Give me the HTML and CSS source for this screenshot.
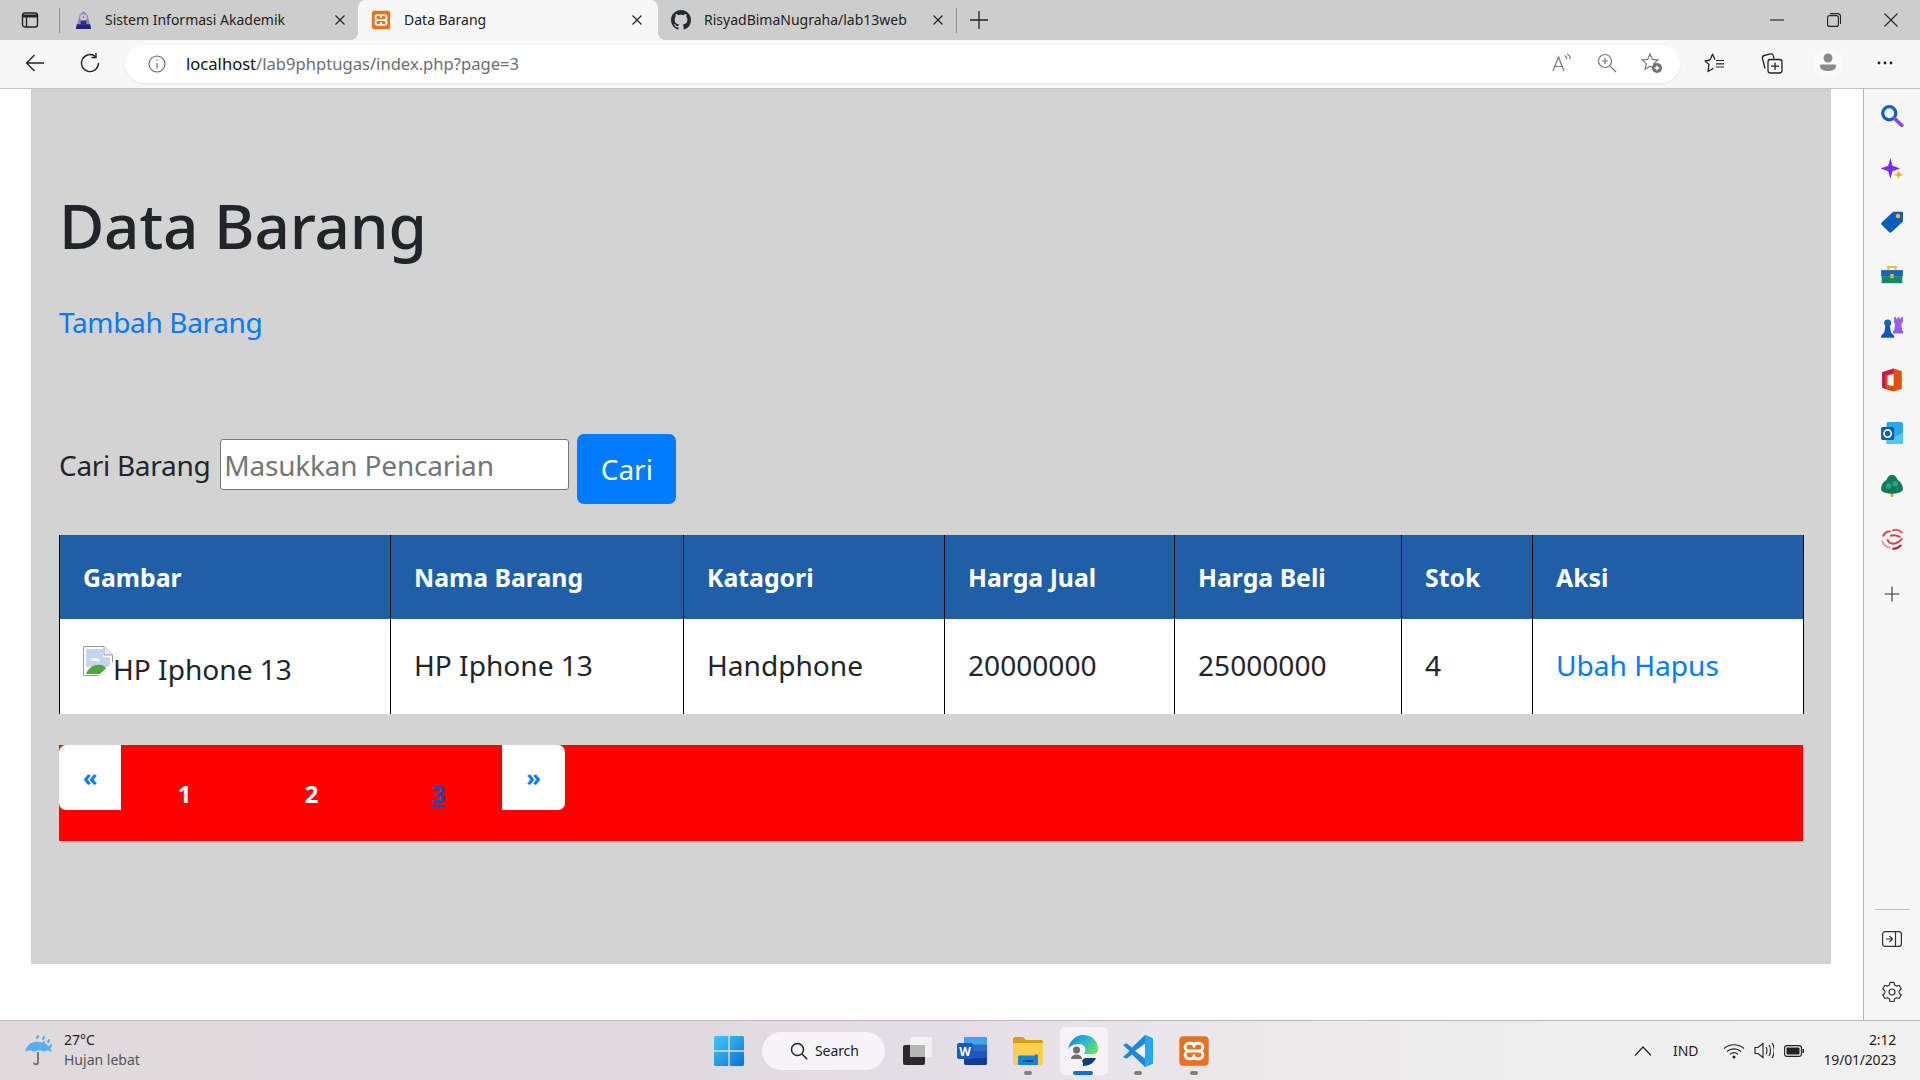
FILE: index.html
```html
<!DOCTYPE html>
<html lang="id">
<head>
    <meta charset="UTF-8">
    <title>Data Barang</title>
    <link rel="stylesheet" href="styles.css">
</head>
<body>
    <svg class="defs" width="0" height="0">
        <symbol id="xampp" viewBox="0 0 24 24">
            <rect x="1" y="1" width="22" height="22" rx="3" fill="#e9711f"/>
            <path d="M12 12H8.200a2.900 2.900 0 0 1 0-5.800h1.600c1.300 0 2.200 1 2.200 2.300M12 12h3.800a2.900 2.900 0 0 0 0-5.800h-1.600c-1.300 0-2.200 1-2.200 2.300M12 12H8.200a2.900 2.900 0 0 0 0 5.800h1.600c1.300 0 2.200-1 2.200-2.300M12 12h3.800a2.900 2.900 0 0 1 0 5.800h-1.600c-1.300 0-2.200-1-2.200-2.300" fill="none" stroke="#fff" stroke-width="2.100" stroke-linecap="round"/>
        </symbol>
    </svg>

    <div class="tabstrip">
        <div class="strip-btn">
            <svg width="18" height="18" viewBox="0 0 18 18" fill="none" stroke="#222" stroke-width="1.4"><rect x="1.500" y="2" width="15" height="14" rx="2.500"/><path d="M1.500 5h15" stroke-width="3"/><path d="M5.500 6v10"/></svg>
        </div>
        <span class="strip-sep"></span>
        <div class="tab">
            <svg class="favicon" viewBox="0 0 16 20"><path d="M8 0l4 4 2 7 2 8H0l2-8 2-7z" fill="#8d8db5"/><circle cx="8" cy="7" r="3.500" fill="#c9c9dd"/><path d="M8 5l1 2H7z" fill="#c33"/><path d="M1 14h14l1 5H0z" fill="#23237e"/><path d="M5 10h6v5H5z" fill="#2f2f92"/></svg>
            <span class="tab-title">Sistem Informasi Akademik</span>
            <svg class="tab-close" viewBox="0 0 12 12"><path d="M1.500 1.500l9 9M10.500 1.500l-9 9"/></svg>
        </div>
        <div class="tab tab-active">
            <svg class="favicon favicon-big"><use href="#xampp"/></svg>
            <span class="tab-title">Data Barang</span>
            <svg class="tab-close" viewBox="0 0 12 12"><path d="M1.500 1.500l9 9M10.500 1.500l-9 9"/></svg>
        </div>
        <div class="tab">
            <svg class="favicon favicon-big" viewBox="0 0 16 16" fill="#24292f"><path d="M8 0C3.580 0 0 3.580 0 8c0 3.540 2.290 6.530 5.470 7.590.4.070.55-.17.55-.38 0-.19-.01-.82-.01-1.490-2.010.37-2.530-.49-2.690-.94-.09-.23-.48-.94-.82-1.130-.28-.15-.68-.52-.01-.53.63-.01 1.080.58 1.230.82.72 1.210 1.870.87 2.330.66.070-.52.28-.87.51-1.070-1.780-.2-3.640-.89-3.640-3.950 0-.87.31-1.590.82-2.150-.08-.2-.36-1.020.08-2.120 0 0 .67-.21 2.200.82.64-.18 1.320-.27 2-.27.68 0 1.360.09 2 .27 1.530-1.040 2.200-.82 2.200-.82.44 1.100.16 1.920.08 2.120.51.56.82 1.270.82 2.150 0 3.070-1.870 3.750-3.650 3.950.29.25.54.73.54 1.480 0 1.070-.01 1.930-.01 2.200 0 .21.15.46.55.38A8.013 8.013 0 0016 8c0-4.420-3.580-8-8-8z"/></svg>
            <span class="tab-title">RisyadBimaNugraha/lab13web</span>
            <svg class="tab-close" viewBox="0 0 12 12"><path d="M1.500 1.500l9 9M10.500 1.500l-9 9"/></svg>
        </div>
        <span class="strip-sep"></span>
        <div class="new-tab">
            <svg width="18" height="18" viewBox="0 0 18 18" fill="none" stroke="#222" stroke-width="1.3"><path d="M9 0v18M0 9h18"/></svg>
        </div>
        <div class="window-btns">
            <div class="window-btn"><svg width="14" height="14" viewBox="0 0 14 14" stroke="#222" stroke-width="1.1"><path d="M0 7h14"/></svg></div>
            <div class="window-btn"><svg width="14" height="14" viewBox="0 0 14 14" fill="none" stroke="#222" stroke-width="1.1"><rect x=".6" y="2.600" width="10.800" height="10.800" rx="2"/><path d="M3 .6h7.500a3 3 0 0 1 3 3V11"/></svg></div>
            <div class="window-btn"><svg width="14" height="14" viewBox="0 0 14 14" stroke="#222" stroke-width="1.1"><path d="M.5.5l13 13M13.500.5l-13 13"/></svg></div>
        </div>
    </div>

    <div class="toolbar">
        <div class="nav-btn">
            <svg width="20" height="20" viewBox="0 0 20 20" fill="none" stroke="#222" stroke-width="1.4"><path d="M19 10H1.500M9.500 2l-8 8 8 8"/></svg>
        </div>
        <div class="nav-btn">
            <svg width="20" height="20" viewBox="0 0 20 20" fill="none" stroke="#222" stroke-width="1.4"><path d="M15.500 3.600A8.500 8.500 0 1 0 18.500 10"/><path d="M16 0v4.500h-4.500"/></svg>
        </div>
        <div class="address">
            <svg class="info-icon" width="18" height="18" viewBox="0 0 18 18" fill="none" stroke="#666" stroke-width="1.1"><circle cx="9" cy="9" r="8"/><path d="M9 8v5.500M9 4.800v1.200"/></svg>
            <span class="url"><span class="url-host">localhost</span>/lab9phptugas/index.php?page=3</span>
            <div class="address-tools">
                <div class="address-btn">
                    <svg width="20" height="20" viewBox="0 0 20 20" fill="none" stroke="#777" stroke-width="1.2"><path d="M1 18L6.500 4l5.500 14M3 13.500h7"/><path d="M12.500 2.500c1.500.6 2.300 1.800 2.500 3.500M15 1c2 1 3.300 2.800 3.500 5"/></svg>
                </div>
                <div class="address-btn">
                    <svg width="20" height="20" viewBox="0 0 20 20" fill="none" stroke="#777" stroke-width="1.2"><circle cx="8" cy="8" r="6.500"/><path d="M12.800 12.800L19 19M8 5v6M5 8h6"/></svg>
                </div>
                <div class="address-btn">
                    <svg width="22" height="22" viewBox="0 0 22 22"><path d="M9 2l2.300 5.400 5.700.5-4.300 3.700 1.300 5.600L9 14.200l-5 3 1.300-5.600L1 7.900l5.700-.5z" fill="none" stroke="#777" stroke-width="1.2"/><circle cx="16" cy="16" r="5" fill="#6f6f6f"/><path d="M16 13.500v5M13.500 16h5" stroke="#fff" stroke-width="1.3"/></svg>
                </div>
            </div>
        </div>
        <div class="tools">
            <div class="tool-btn">
                <svg width="22" height="20" viewBox="0 0 22 20" fill="none" stroke="#222" stroke-width="1.3" stroke-linejoin="round"><path d="M11 6.500L8.500 1.200 6 7 1 7.800l4 3.700L4 18.500l5.500-3.200"/><path d="M12 7.500h8M12 10.800h8M12 14h8" stroke-width="1.2"/></svg>
            </div>
            <div class="tool-btn">
                <svg width="22" height="22" viewBox="0 0 22 22" fill="none" stroke="#222" stroke-width="1.3"><path d="M4 16.500L1.500 6.500a2.500 2.500 0 0 1 1.800-3l6-1.600a2.500 2.500 0 0 1 3 1.800l.7 2.800"/><rect x="7" y="7.500" width="14" height="13.500" rx="2.500"/><path d="M14 10.500v7.500M10 14.200h8"/></svg>
            </div>
            <div class="tool-btn">
                <div class="avatar">
                    <svg width="16" height="20" viewBox="0 0 16 20" fill="#8a8a8a"><circle cx="8" cy="5" r="4.500"/><path d="M1 11.500h14c1 0 1 1 1 1.500 0 3.500-3.500 5-8 5s-8-1.500-8-5c0-.5 0-1.500 1-1.500z"/></svg>
                </div>
            </div>
            <div class="tool-btn">
                <svg width="16" height="4" viewBox="0 0 16 4" fill="#222"><circle cx="2" cy="2" r="1.4"/><circle cx="8" cy="2" r="1.4"/><circle cx="14" cy="2" r="1.4"/></svg>
            </div>
        </div>
    </div>

    <div class="workspace">
        <main class="page">
            <div class="container">
                <h1>Data Barang</h1>
                <a class="add-link" href="#">Tambah Barang</a>
                <form class="search">
                    <label class="search-label">Cari Barang</label>
                    <input class="search-input" type="text" placeholder="Masukkan Pencarian">
                    <button class="search-btn" type="button">Cari</button>
                </form>
                <table class="items">
                    <colgroup>
                        <col class="col-gambar"><col class="col-nama"><col class="col-katagori"><col class="col-jual"><col class="col-beli"><col class="col-stok"><col class="col-aksi">
                    </colgroup>
                    <thead>
                        <tr>
                            <th>Gambar</th>
                            <th>Nama Barang</th>
                            <th>Katagori</th>
                            <th>Harga Jual</th>
                            <th>Harga Beli</th>
                            <th>Stok</th>
                            <th>Aksi</th>
                        </tr>
                    </thead>
                    <tbody>
                        <tr>
                            <td class="cell-image"><svg class="broken" viewBox="0 0 30 30"><path d="M.5.5H21l8.500 8.500v20.500H.5z" fill="#fff" stroke="#9a9a9a"/><path d="M21 .5V9h8.500" fill="#eee" stroke="#9a9a9a"/><path d="M3 3h17v8h7v10H3z" fill="#c5d6f2"/><path d="M7 15c2-4 8-4 10 0z" fill="#fff"/><path d="M3 28c3-9 13-11 18-8l7 8z" fill="#4fa83d"/><path d="M15 30L30 16v14z" fill="#fff"/><path d="M17 30L30 18" stroke="#fff" stroke-width="3"/></svg>HP Iphone 13</td>
                            <td>HP Iphone 13</td>
                            <td>Handphone</td>
                            <td>20000000</td>
                            <td>25000000</td>
                            <td>4</td>
                            <td><a href="#">Ubah</a> <a href="#">Hapus</a></td>
                        </tr>
                    </tbody>
                </table>
                <ul class="pages">
                    <li class="page-arrow page-prev"><a href="#">«</a></li>
                    <li class="page-num"><a href="#">1</a></li>
                    <li class="page-num"><a href="#">2</a></li>
                    <li class="page-num page-current"><a href="#">3</a></li>
                    <li class="page-arrow page-next"><a href="#">»</a></li>
                </ul>
            </div>
        </main>
        <aside class="sidebar">
            <div class="side-icons">
                <div class="side-btn"><svg viewBox="0 0 22 22"><circle cx="8.500" cy="8.500" r="6" fill="none" stroke="#0f5fc4" stroke-width="3"/><path d="M13.500 13.500l6.500 6" stroke="#8a4fe0" stroke-width="3.400" stroke-linecap="round"/></svg></div>
                <div class="side-btn"><svg viewBox="0 0 22 22"><path d="M9.500 1l2 7 7 2.500-7 2.500-2 7-2-7-7-2.500 7-2.500z" fill="#7a2df0"/><path d="M17 12l1.200 3 3 1.200-3 1.200-1.200 3-1.200-3-3-1.200 3-1.200z" fill="#f4b21b"/></svg></div>
                <div class="side-btn"><svg viewBox="0 0 22 22"><path d="M12 1.500h8a1 1 0 0 1 1 1v8L10.500 20.500a1.500 1.500 0 0 1-2 0L1.500 13.500a1.500 1.500 0 0 1 0-2z" fill="#0b5cc0"/><circle cx="16.500" cy="5.500" r="2" fill="#fbc02d"/></svg></div>
                <div class="side-btn"><svg viewBox="0 0 22 22"><path d="M7.500 7V3.500h7V7" fill="none" stroke="#f0b429" stroke-width="1.6"/><path d="M1 6.500h20V12H1z" fill="#1565c0"/><path d="M1.500 12h19v6.500h-19z" fill="#0d8a68"/><rect x="9.500" y="10" width="3" height="4" fill="#f0b429"/></svg></div>
                <div class="side-btn"><svg viewBox="0 0 22 22"><path d="M13 1h1.800v1.500h1.400V1h1.600v1.500h1.400V1H21v5l-1.500 1 .8 6.500h1V16H12v-2.500h1l.8-6.500L13 6z" fill="#9a5cf0"/><circle cx="7" cy="6.500" r="3.200" fill="#1565c0"/><path d="M5 9h4l1 6 3 3v2H1v-2l3-3z" fill="#1357b8"/></svg></div>
                <div class="side-btn"><svg viewBox="0 0 22 22"><path d="M12.500 0.500L20 3v16l-7.500 2.500L2 18V4z" fill="#e2500c"/><path d="M12.500 0.500L2 4v14l10.500 3.500-7.500-3.500V6.500l7.500-2z" fill="#c2185b"/><path d="M7 7l5.500-1.500v11L7 15.500z" fill="#f7f7f7"/></svg></div>
                <div class="side-btn"><svg viewBox="0 0 22 22"><rect x="6" y="1" width="15" height="20" rx="1.500" fill="#28a8ea"/><path d="M6 12l7.500 3 7.500-4.500V21H6z" fill="#50c8f5"/><rect x="1" y="5.500" width="12" height="12" rx="1.500" fill="#0f5fa8"/><circle cx="7" cy="11.500" r="3.300" fill="none" stroke="#fff" stroke-width="1.6"/></svg></div>
                <div class="side-btn"><svg viewBox="0 0 22 22"><path d="M9.700 17h2.600v4H9.700z" fill="#f29a1f"/><path d="M11 1c3 0 4.500 2.500 5 4.500 3 1.500 5 5 5 8 0 2.500-3 4.500-10 4.500S1 16 1 13.500c0-3 2-6.500 5-8C6.500 3.500 8 1 11 1z" fill="#0e7c5a"/><circle cx="8" cy="11" r="2.500" fill="#2da37b"/><circle cx="14" cy="9" r="2.500" fill="#2da37b"/></svg></div>
                <div class="side-btn"><svg viewBox="0 0 22 22" fill="none" stroke="#d9363e" stroke-width="1.8" stroke-linecap="round"><path d="M12 3c3-1 6 0 8 2" stroke="#e05a5a"/><path d="M3 8c1-2 3-4 6-4"/><path d="M10 8c3-1 6 0 8 1"/><path d="M2 13c1 3 3 5 7 6" stroke="#eea0a0"/><path d="M7 12c1 2 3 4 7 3 2-.5 4-1.500 6-4"/><path d="M12 20c3 0 5-1 7-3" stroke="#b71c1c"/></svg></div>
                <div class="side-btn"><svg class="side-plus" viewBox="0 0 16 16" fill="none" stroke="#333" stroke-width="1.1"><path d="M8 .5v15M.5 8h15"/></svg></div>
            </div>
            <div class="side-bottom">
                <span class="side-divider"></span>
                <div class="side-btn side-btn-sm"><svg width="20" height="16" viewBox="0 0 20 16" fill="none" stroke="#333" stroke-width="1.2"><rect x=".6" y=".6" width="18.800" height="14.800" rx="2.500"/><path d="M13.500.6v14.800M4 8h6M7.500 5l3 3-3 3"/></svg></div>
                <div class="side-btn side-btn-sm"><svg width="22" height="22" viewBox="0 0 22 22" fill="none" stroke="#333" stroke-width="1.2"><path d="M9 1.300h4l.6 2.700 2 1.100 2.600-.8 2 3.500-2 1.900v2.400l2 1.900-2 3.500-2.600-.8-2 1.100-.6 2.700H9l-.6-2.700-2-1.100-2.600.8-2-3.500 2-1.900V9.700l-2-1.900 2-3.500 2.600.8 2-1.100z" stroke-linejoin="round"/><circle cx="11" cy="11" r="3"/></svg></div>
            </div>
        </aside>
    </div>

    <footer class="taskbar">
        <div class="weather">
            <svg class="weather-icon" width="32" height="34" viewBox="0 0 32 34"><path d="M14 18v10c0 3-4 3-4 .5" fill="none" stroke="#777" stroke-width="2"/><path d="M1 18C3 9 10 7 15 8c6 0 11 4 13 10-3-2-6-2-8 0-2-2-8-2-10 0-2-2-6-2-9 0z" fill="#55aef0"/><path d="M14 2l-1 2M20 3l-1 2M25 6l-1 2M20 8l-1 2M27 11l-1 2" stroke="#5aa7e6" stroke-width="2" stroke-linecap="round"/></svg>
            <div class="weather-text">
                <span class="weather-temp">27°C</span>
                <span class="weather-desc">Hujan lebat</span>
            </div>
        </div>
        <div class="task-center">
            <div class="task-item task-start">
                <svg width="30" height="30" viewBox="0 0 30 30"><defs><linearGradient id="win" x1="0" y1="0" x2="1" y2="1"><stop offset="0" stop-color="#3ecbfa"/><stop offset="1" stop-color="#0a72d6"/></linearGradient></defs><path d="M0 1.500A1.500 1.500 0 0 1 1.500 0h12.800v14.300H0zM15.700 0h12.800A1.500 1.500 0 0 1 30 1.500v12.800H15.700zM0 15.700h14.300V30H1.500A1.500 1.500 0 0 1 0 28.500zM15.700 15.700H30v12.800a1.500 1.500 0 0 1-1.500 1.500H15.700z" fill="url(#win)"/></svg>
            </div>
            <div class="task-search">
                <svg width="18" height="18" viewBox="0 0 18 18" fill="none" stroke="#222" stroke-width="1.5"><circle cx="7.500" cy="7.500" r="6"/><path d="M12 12l5.200 5.200"/></svg>
                <span>Search</span>
            </div>
            <div class="task-item task-view">
                <svg width="30" height="30" viewBox="0 0 30 30"><rect x="1" y="9" width="22" height="20" rx="2" fill="#2a2a2a"/><rect x="8" y="1" width="22" height="20" rx="2" fill="#f4f4f4" fill-opacity=".85"/><rect x="8" y="9" width="15" height="12" fill="#b5b5b5"/></svg>
            </div>
            <div class="task-item task-word">
                <svg width="30" height="30" viewBox="0 0 30 30"><rect x="7" y="1" width="23" height="28" rx="2" fill="#2b7cd3"/><path d="M7 8.500h23V15H7z" fill="#2b6cc4"/><path d="M7 15h23v7H7z" fill="#185abd"/><path d="M7 22h23v5a2 2 0 0 1-2 2H9a2 2 0 0 1-2-2z" fill="#103f91"/><path d="M7 1h21a2 2 0 0 1 2 2v5.500H7z" fill="#41a5ee"/><rect x="0" y="7" width="16" height="16" rx="2" fill="#185abd"/><text class="word-letter" x="8" y="19.500" text-anchor="middle">W</text></svg>
            </div>
            <div class="task-item task-running task-files">
                <svg width="32" height="28" viewBox="0 0 32 28"><path d="M1 2a2 2 0 0 1 2-2h8l3 3h15a2 2 0 0 1 2 2v4H1z" fill="#d99c12"/><path d="M1 6h30v20a2 2 0 0 1-2 2H3a2 2 0 0 1-2-2z" fill="#fccf4d"/><path d="M6 20a1.500 1.500 0 0 1 1.500-1.500h15A1.500 1.500 0 0 1 26 20v8H6z" fill="#1482d8"/><path d="M11 24h10" stroke="#0b3f73" stroke-width="1.6"/></svg>
            </div>
            <div class="task-item task-active">
                <svg width="32" height="32" viewBox="0 0 32 32"><defs><linearGradient id="edge" x1="0" y1="0" x2="1" y2=".6"><stop offset="0" stop-color="#0c7fd0"/><stop offset=".55" stop-color="#2ab6d8"/><stop offset="1" stop-color="#5fdc67"/></linearGradient></defs><path d="M1 15C2 6 9 0 16 0c9 0 15 6 15 14 0 4-3 5-6 5h-8c3-4 1-10-5-10C7 9 3 11 1 15z" fill="url(#edge)"/><path d="M1 16c0-4 4-6 8-6 5 0 8 5 5 10-1 3-1 6 2 8-9 1-15-5-15-12z" fill="#f2f2f2"/><circle cx="9.500" cy="15" r="3.500" fill="#6e6e6e"/><path d="M4 24c0-3 3-4.500 5.500-4.500S15 21 15 24z" fill="#6e6e6e"/><path d="M16 28c-2-2 0-5 3-5h10c-2 5-7 8-13 8z" fill="#0f3f80"/></svg>
                <span class="active-bar"></span>
            </div>
            <div class="task-item task-running task-code">
                <svg width="30" height="32" viewBox="0 0 30 32"><path d="M22 0l8 3.500v25L22 32 9 19.500l-5.500 4.300L0 22l6.500-6L0 10l3.500-1.800L9 12.500z" fill="#1e88d8"/><path d="M22 0l8 3.500v25L22 32z" fill="#27a7ee"/><path d="M22 8.500L12 16l10 7.500z" fill="#f4f1f1"/></svg>
            </div>
            <div class="task-item task-running task-xampp">
                <svg width="32" height="32"><use href="#xampp"/></svg>
            </div>
        </div>
        <div class="tray">
            <svg class="tray-caret" width="18" height="10" viewBox="0 0 18 10" fill="none" stroke="#222" stroke-width="1.2"><path d="M1 9.500L9 1l8 8.500"/></svg>
            <span class="tray-lang">IND</span>
            <svg class="tray-wifi" width="22" height="16" viewBox="0 0 22 16" fill="none" stroke="#222" stroke-width="1.2"><path d="M1 5.500c5.500-5 14.500-5 20 0M4 8.500c4-3.500 10-3.500 14 0M7 11.300c2.500-2 5.500-2 8 0"/><circle cx="11" cy="14" r="1.500" fill="#222" stroke="none"/></svg>
            <svg class="tray-sound" width="20" height="17" viewBox="0 0 20 17" fill="none" stroke="#222" stroke-width="1.1"><path d="M1 5.500h3L9 1.500v14l-5-4H1z"/><path d="M12 5c1.200 2 1.200 5 0 7M15 3c2 3 2 8 0 11M18 1c3 4 3 11 0 15"/></svg>
            <svg class="tray-battery" width="20" height="12" viewBox="0 0 20 12"><rect x=".6" y=".6" width="16.800" height="10.800" rx="2.500" fill="none" stroke="#222" stroke-width="1.1"/><rect x="2.500" y="2.500" width="13" height="7" rx="1" fill="#222"/><path d="M18.500 4h1.500v4h-1.500z" fill="#222"/></svg>
            <div class="clock">
                <span>2:12</span>
                <span>19/01/2023</span>
            </div>
        </div>
    </footer>
</body>
</html>
```

FILE: styles.css
```css
* {
    box-sizing: border-box;
}

html, body {
    margin: 0;
    width: 1920px;
    height: 1080px;
    overflow: hidden;
}

body {
    display: flex;
    flex-direction: column;
    font-family: "Noto Sans", Arial, sans-serif;
    background: #fff;
}

.defs {
    display: none;
}

/* browser tabs */
.tabstrip {
    display: flex;
    align-items: center;
    height: 40px;
    background: #cdcdcd;
    color: #222;
}

.strip-btn {
    display: flex;
    align-items: center;
    justify-content: center;
    width: 59px;
}

.strip-sep {
    width: 1px;
    height: 25px;
    background: #8f8f8f;
}

.tab {
    position: relative;
    display: flex;
    align-items: center;
    gap: 13px;
    width: 298px;
    height: 40px;
    padding: 0 12px 0 15px;
    font-size: 14px;
}

.tab-active {
    width: 300px;
    padding-right: 15px;
    background: #f7f7f7;
    border-radius: 8px 8px 0 0;
}

.tab-active::before,
.tab-active::after {
    content: "";
    position: absolute;
    bottom: 0;
    width: 8px;
    height: 8px;
}

.tab-active::before {
    left: -8px;
    background: radial-gradient(circle at 0 0, transparent 8px, #f7f7f7 8px);
}

.tab-active::after {
    right: -8px;
    background: radial-gradient(circle at 100% 0, transparent 8px, #f7f7f7 8px);
}

.favicon {
    flex: none;
    width: 17px;
    height: 19px;
}

.favicon-big {
    width: 20px;
    height: 20px;
    margin-left: -2px;
    margin-right: 0;
}

.tab-title {
    flex: 1;
    white-space: nowrap;
    margin-top: -2px;
}

.tab-close {
    flex: none;
    width: 12px;
    height: 12px;
    fill: none;
    stroke: #222;
    stroke-width: 1.2;
}

.new-tab {
    display: flex;
    justify-content: center;
    width: 44px;
}

.window-btns {
    display: flex;
    margin-left: auto;
}

.window-btn {
    display: flex;
    align-items: center;
    justify-content: center;
    width: 57px;
    height: 40px;
}

.window-btn:last-child {
    width: 58px;
}

/* address bar */
.toolbar {
    display: flex;
    align-items: center;
    height: 49px;
    padding: 0 7px 1px 7px;
    background: #f7f7f7;
    border-bottom: 1px solid #c4c4c4;
}

.nav-btn {
    display: flex;
    align-items: center;
    justify-content: center;
    width: 55px;
    margin-bottom: 2px;
}

.address {
    display: flex;
    align-items: center;
    width: 1555px;
    height: 38px;
    margin-left: 8px;
    padding: 0 6px 0 23px;
    background: #fff;
    border-radius: 19px;
    box-shadow: 0 1px 2px rgba(0, 0, 0, 0.08);
}

.info-icon {
    flex: none;
    margin-right: 20px;
}

.url {
    margin-top: -1px;
    font-size: 16.6px;
    color: #6e6e6e;
}

.url-host {
    color: #111;
}

.address-tools {
    display: flex;
    margin-left: auto;
    margin-bottom: 2px;
}

.address-btn {
    display: flex;
    align-items: center;
    justify-content: center;
    width: 45px;
}

.tools {
    display: flex;
    margin-left: 7px;
    margin-bottom: 2px;
}

.tool-btn {
    display: flex;
    align-items: center;
    justify-content: center;
    width: 56.5px;
    height: 44px;
}

.avatar {
    display: flex;
    align-items: center;
    justify-content: center;
    width: 30px;
    height: 30px;
    background: #fafafa;
    border-radius: 50%;
}

/* page */
.workspace {
    display: flex;
    height: 931px;
}

.page {
    width: 1863px;
    padding: 0 32px 0 31px;
    background: #fff;
}

.container {
    height: 875px;
    padding: 100px 28px 0;
    background: #d3d3d3;
    color: #212529;
    font-size: 28px;
    line-height: 45px;
}

h1 {
    margin: 0 0 39px;
    font-size: 62px;
    font-weight: 500;
    line-height: 72px;
    letter-spacing: -0.2px;
}

a {
    color: #007bff;
    text-decoration: none;
}

.add-link {
    display: block;
    letter-spacing: -0.35px;
}

.search {
    display: flex;
    align-items: flex-start;
    margin-top: 89px;
}

.search-label {
    margin: 9px 10px 0 0;
    letter-spacing: -0.3px;
}

.search-input {
    width: 349px;
    height: 51px;
    margin-top: 5px;
    padding: 0 3px;
    border: 1px solid #767676;
    border-radius: 3px;
    font-family: inherit;
    font-size: 28px;
    letter-spacing: -0.2px;
    background: #fff;
}

.search-input::placeholder {
    color: #757575;
    opacity: 1;
}

.search-btn {
    width: 99px;
    height: 70px;
    margin-left: 8px;
    padding: 0;
    border: 0;
    border-radius: 7px;
    background: #007bff;
    color: #fff;
    font-family: inherit;
    font-size: 28px;
}

.items {
    width: 1744px;
    margin-top: 31px;
    border-collapse: collapse;
    table-layout: fixed;
}

.col-gambar { width: 331px; }
.col-nama { width: 293px; }
.col-katagori { width: 261px; }
.col-jual { width: 230px; }
.col-beli { width: 227px; }
.col-stok { width: 131px; }
.col-aksi { width: 271px; }

th, td {
    padding: 0 23px;
    border-left: 1px solid #000;
    border-right: 1px solid #000;
    text-align: left;
    white-space: nowrap;
}

th {
    height: 84px;
    background: #1f5fa8;
    color: #fff;
    font-size: 24.8px;
    font-weight: 700;
}

td {
    height: 95px;
    padding-bottom: 2px;
    background: #fff;
    font-size: 28.1px;
}

.broken {
    width: 30px;
    height: 30px;
    vertical-align: 4px;
}

.cell-image {
    padding-top: 6px;
}

.pages {
    display: flex;
    height: 96px;
    margin: 31px 0 0;
    padding: 0;
    list-style: none;
    background: #f00;
    font-size: 24px;
    font-weight: 700;
}

.page-arrow {
    display: flex;
    align-items: center;
    justify-content: center;
    height: 65px;
    padding-bottom: 2px;
    background: #fff;
}

.page-prev {
    width: 62px;
    border-radius: 7px 0 0 7px;
}

.page-next {
    width: 63px;
    border-radius: 0 7px 7px 0;
}

.page-num {
    width: 127px;
    padding-top: 26px;
    text-align: center;
}

.page-num a {
    color: #fff;
}

.page-current a {
    color: #0056b3;
    text-decoration: underline;
}

/* edge sidebar */
.sidebar {
    display: flex;
    flex-direction: column;
    justify-content: space-between;
    width: 57px;
    border-left: 1px solid #b8b8b8;
    background: #f7f7f7;
}

.side-icons {
    display: flex;
    flex-direction: column;
    padding-top: 1px;
}

.side-btn {
    display: flex;
    align-items: center;
    justify-content: center;
    height: 52.8px;
}

.side-btn svg {
    width: 24px;
    height: 24px;
}

.side-btn .side-plus {
    width: 16px;
    height: 16px;
    margin-top: 4px;
}

.side-bottom {
    display: flex;
    flex-direction: column;
    align-items: center;
    padding-bottom: 2px;
}

.side-divider {
    width: 35px;
    height: 1px;
    margin-bottom: 2px;
    background: #bdbdbd;
}

.side-btn-sm {
    height: 53px;
}

.side-btn-sm svg {
    width: auto;
    height: auto;
}

/* windows taskbar */
.taskbar {
    display: flex;
    align-items: center;
    height: 60px;
    border-top: 1px solid #bdb9bd;
    background: linear-gradient(90deg, #e0dadd 0%, #e0dadf 35%, #e4dfe6 50%, #ebe8ea 65%, #f0f0f0 85%, #f1f1f1 100%);
    color: #222;
}

.weather {
    display: flex;
    align-items: center;
    width: 700px;
    padding-left: 24px;
}

.weather-icon {
    flex: none;
    margin-right: 8px;
}

.weather-text {
    display: flex;
    flex-direction: column;
    gap: 2px;
    margin-top: -2px;
    font-size: 14px;
    line-height: 18px;
}

.weather-desc {
    color: #555;
}

.task-center {
    display: flex;
    align-items: center;
    height: 100%;
}

.task-item {
    position: relative;
    display: flex;
    align-items: center;
    justify-content: center;
    width: 55.5px;
    height: 48px;
}

.task-start {
    width: 58px;
    margin-right: 4px;
}

.task-search {
    display: flex;
    align-items: center;
    gap: 7px;
    width: 123px;
    height: 38px;
    padding-left: 28px;
    margin-right: 4px;
    background: #f6f4f7;
    border-radius: 19px;
    font-size: 14px;
    letter-spacing: -0.1px;
}

.task-active {
    width: 47px;
    margin: 0 4px;
    background: #f5f3f5;
    border-radius: 5px;
    box-shadow: 3px 0 0 -1px #efedef;
}

.task-running::after {
    content: "";
    position: absolute;
    bottom: 0;
    left: 50%;
    width: 8px;
    height: 4px;
    margin-left: -4px;
    background: #808080;
    border-radius: 2px;
}

.active-bar {
    position: absolute;
    bottom: 0;
    left: 50%;
    width: 20px;
    height: 4px;
    margin-left: -10px;
    background: #0a74d6;
    border-radius: 2px;
}

.word-letter {
    fill: #fff;
    font-family: "Noto Sans", sans-serif;
    font-size: 12px;
    font-weight: 700;
}

.tray {
    display: flex;
    align-items: center;
    margin-left: auto;
    padding-right: 24px;
}

.tray-caret {
    margin-right: 21px;
}

.tray-lang {
    margin-right: 24px;
    font-size: 14px;
}

.tray-wifi {
    margin-right: 9px;
}

.tray-sound {
    margin-right: 10px;
}

.tray-battery {
    margin-right: 20px;
}

.clock {
    display: flex;
    flex-direction: column;
    align-items: flex-end;
    gap: 2px;
    margin-top: -1px;
    font-size: 14px;
    line-height: 18px;
    letter-spacing: -0.2px;
}
```
